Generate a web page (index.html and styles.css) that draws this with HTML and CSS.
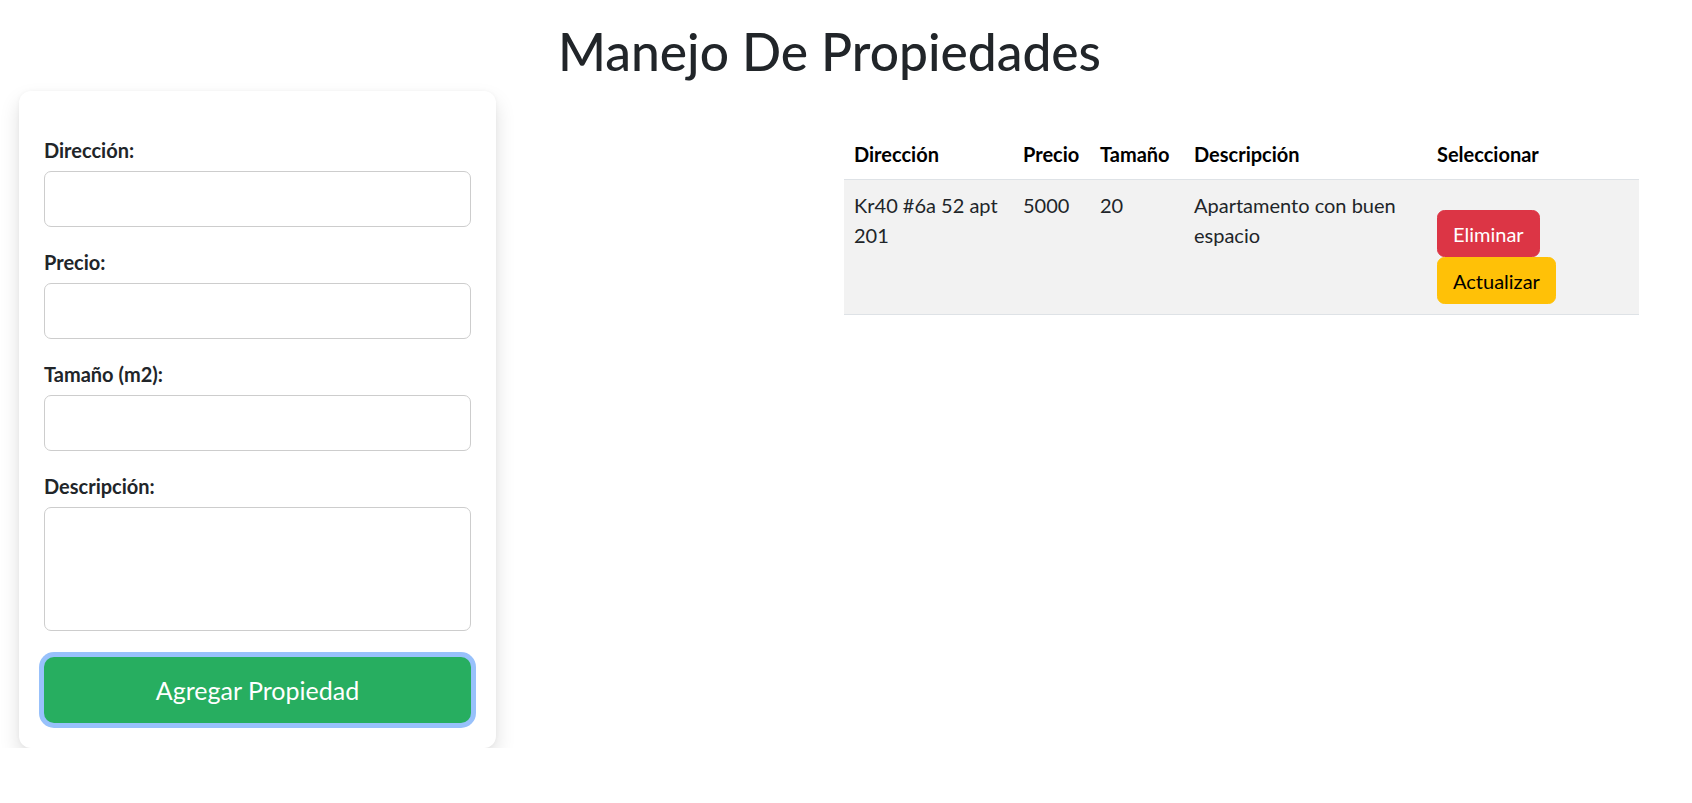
FILE: index.html
```html
<!DOCTYPE html>
<html lang="es">
<head>
<meta charset="utf-8">
<title>Manejo De Propiedades</title>
<link rel="stylesheet" href="styles.css">
</head>
<body>
<h1 class="page-title">Manejo De Propiedades</h1>
<div class="layout">
  <section class="form-col">
    <form class="card">
      <div class="field">
        <label class="field-label" for="dir">Dirección:</label>
        <input class="control" id="dir" type="text">
      </div>
      <div class="field">
        <label class="field-label" for="precio">Precio:</label>
        <input class="control" id="precio" type="text">
      </div>
      <div class="field">
        <label class="field-label" for="tam">Tamaño (m2):</label>
        <input class="control" id="tam" type="text">
      </div>
      <div class="field">
        <label class="field-label" for="desc">Descripción:</label>
        <textarea class="control control-area" id="desc"></textarea>
      </div>
      <button class="btn-add" type="button">Agregar Propiedad</button>
    </form>
  </section>
  <section class="table-col">
    <table class="props">
      <thead>
        <tr>
          <th class="col-dir">Dirección</th>
          <th class="col-price">Precio</th>
          <th class="col-size">Tamaño</th>
          <th class="col-desc">Descripción</th>
          <th class="col-sel">Seleccionar</th>
        </tr>
      </thead>
      <tbody>
        <tr>
          <td>Kr40 #6a 52 apt 201</td>
          <td>5000</td>
          <td>20</td>
          <td>Apartamento con buen espacio</td>
          <td>
            <div class="actions">
              <button class="btn btn-danger" type="button">Eliminar</button>
              <button class="btn btn-warning" type="button">Actualizar</button>
            </div>
          </td>
        </tr>
      </tbody>
    </table>
  </section>
</div>
</body>
</html>
```

FILE: styles.css
```css
* { box-sizing: border-box; }

body {
  margin: 0;
  font-family: Lato, "Open Sans", "Noto Sans", sans-serif;
  font-size: 20px;
  line-height: 30px;
  color: #212529;
  background: #fff;
}

.page-title {
  margin: 0;
  padding: 21px 33px 0 0;
  text-align: center;
  font-size: 51.5px;
  line-height: 60px;
  font-weight: 500;
  color: #212529;
}

.layout {
  display: grid;
  grid-template-columns: 844px 795px;
  margin-top: 10px;
}

.form-col {
  padding-left: 19px;
}

.card {
  width: 477px;
  padding: 44px 25px 25px;
  background: #fff;
  border-radius: 12px;
  box-shadow: 0 10px 20px rgba(0, 0, 0, 0.13), 0 0 4px rgba(0, 0, 0, 0.04);
}

.field {
  display: flex;
  flex-direction: column;
  margin-bottom: 20px;
}

.field-label {
  font-weight: 700;
  line-height: 30px;
  margin-bottom: 6px;
  color: #212529;
}

.control {
  display: block;
  width: 100%;
  height: 56px;
  border: 1px solid #cdcdcd;
  border-radius: 7px;
  background: #fff;
  font: inherit;
  padding: 10px 15px;
}

.control-area {
  height: 124px;
  resize: none;
}

.field:last-of-type {
  margin-bottom: 26px;
}

.btn-add {
  display: block;
  width: 100%;
  height: 66px;
  border: none;
  border-radius: 10px;
  background: #27ae60;
  color: #fff;
  font-family: inherit;
  font-size: 25px;
  line-height: 30px;
  box-shadow: 0 0 0 5px #98c1fb;
  cursor: pointer;
}

.table-col {
  padding-top: 38px;
}

.props {
  width: 795px;
  table-layout: fixed;
  border-collapse: collapse;
}

.props th,
.props td {
  padding: 10px;
  text-align: left;
  vertical-align: top;
  border-bottom: 1px solid #dee2e6;
  line-height: 30px;
}

.props th {
  font-weight: 700;
  color: #000;
  vertical-align: bottom;
}

.props tbody tr {
  background: #f2f2f2;
}

.props td {
  color: #212529;
}

.col-dir { width: 169px; }
.col-price { width: 77px; }
.col-size { width: 94px; }
.col-desc { width: 243px; }
.col-sel { width: 212px; }

.actions {
  display: flex;
  flex-direction: column;
  align-items: flex-start;
  padding-top: 20px;
}

.btn {
  font-family: inherit;
  font-size: 20px;
  line-height: 30px;
  padding: 7.5px 15px;
  border: 1px solid transparent;
  border-radius: 7.5px;
  cursor: pointer;
}

.btn-danger {
  background: #dc3545;
  border-color: #dc3545;
  color: #fff;
}

.btn-warning {
  background: #ffc107;
  border-color: #ffc107;
  color: #000;
}
```
